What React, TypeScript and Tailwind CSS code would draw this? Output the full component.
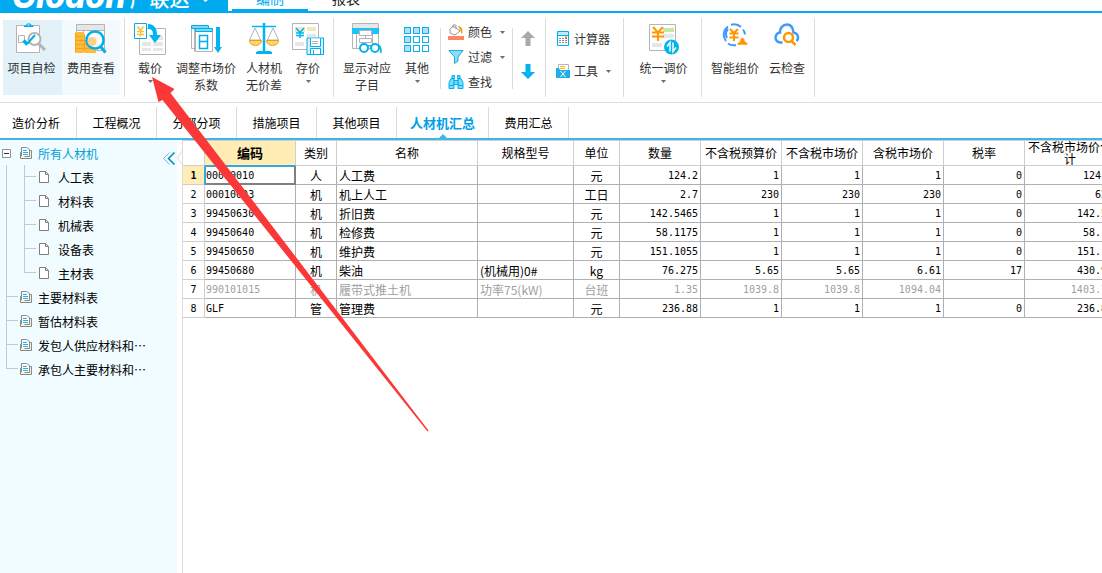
import { useState } from "react";
import type { ReactNode } from "react";

function CheckIcon() {
  return (
    <svg width="32" height="32" viewBox="0 0 32 32" fill="none">
      <path d="M.5 2.500h23v27H.5z" fill="#fff" stroke="#b4b4b4" />
      <path d="M8 4V2.500h2C10.500-.5 15-.5 15.500 2.500h2V4z" fill="#00aeef" />
      <path d="M11.500 2h2" stroke="#fff" />
      <path d="M2.500 12.500h6v7h-6z" fill="#fff" stroke="#b4b4b4" />
      <circle cx="18.500" cy="16" r="6" fill="#fff" stroke="#b4b4b4" strokeWidth="2" />
      <path d="M23 21l6 6" stroke="#b4b4b4" strokeWidth="3" />
      <path d="M7.500 17.500l4 4" stroke="#00aeef" strokeWidth="3.500" />
      <path d="M11 21l8-9" stroke="#00aeef" strokeWidth="2" />
    </svg>
  );
}

function CostIcon() {
  return (
    <svg width="32" height="32" viewBox="0 0 32 32" fill="none">
      <path d="M1.500 1.500h28v26h-28z" fill="#fff" stroke="#b4b4b4" />
      <path d="M2 2h27v5H2z" fill="#e6e6e6" />
      <path d="M2 7.500h27M8.500 8v19M15.500 8v19M22.500 8v19M2 14.500h27M2 21.500h27" stroke="#b4b4b4" />
      <path d="M0 10l1-1h7l1 1v20H1l-1-1zM10 17h11v13H10z" fill="#fdbb3c" />
      <path d="M1 13.500h7M1 17.500h11M1 21.500h11M1 25.500h20M9.500 11v18M.5 10v19" stroke="#f7a01b" />
      <circle cx="20" cy="17" r="8.500" fill="#fff" fillOpacity=".85" stroke="#00aeef" strokeWidth="2.500" />
      <circle cx="17" cy="18.500" r="4.500" fill="#fcd08a" />
      <path d="M25.500 23.500l5 6" stroke="#00aeef" strokeWidth="3" />
    </svg>
  );
}

function LoadPriceIcon() {
  return (
    <svg width="32" height="32" viewBox="0 0 32 32" fill="none">
      <path d="M5.500 5.500h26v26h-26z" fill="#fff" stroke="#b4b4b4" />
      <path d="M8 19h9v4H8zM19 19h10v4H19zM8 25h9v3H8zM19 25h10v3H19zM23 13h6v4h-6z" fill="#e6e6e6" />
      <path d="M.500.500h12v15H.5z" fill="#fff" stroke="#00aeef" />
      <path d="M3.500 3.500l3 4 3-4M3 8.500h7M3 11.500h7M6.500 7.500v6" stroke="#f9c23c" strokeWidth="1.500" />
      <path d="M14 1c6 0 9 4 9 11h4l-6 8-6-8h4c0-4-1-6-5-6z" fill="#00b4f0" />
    </svg>
  );
}

function AdjustIcon() {
  return (
    <svg width="32" height="32" viewBox="0 0 32 32" fill="none">
      <path d="M1.500 3v22.500H5M4.500 6v22.500" stroke="#b4b4b4" />
      <path d="M1.500 2.500h17v3H1.500z" fill="#7fd7f5" stroke="#00aeef" />
      <path d="M5.500 5.500h17v23h-17z" fill="#fff" stroke="#b4b4b4" />
      <path d="M5.500 5.500h17v3h-17z" fill="#7fd7f5" stroke="#00aeef" />
      <path d="M9.500 12.500h8v13h-8zM9.500 18.500h8" stroke="#00aeef" strokeWidth="1.500" />
      <path d="M26 4h4v20h2l-4 6-4-6h2z" fill="#00b4f0" />
    </svg>
  );
}

function ScaleIcon() {
  return (
    <svg width="32" height="32" viewBox="0 0 32 32" fill="none">
      <path d="M7 5L1.500 17h11zM25 5l-5.500 12h11z" stroke="#b4b4b4" />
      <path d="M1.500 17.500h12c0 6.500-12 6.500-12 0zM18.500 17.500h12c0 6.500-12 6.500-12 0z" fill="#fbd96e" stroke="#f39c12" />
      <path d="M4 3.500h24" stroke="#00b4f0" strokeWidth="1.500" />
      <path d="M16 0v28" stroke="#00b4f0" strokeWidth="2.500" />
      <path d="M8 31v-2l2-1h12l2 1v2z" fill="#00b4f0" />
    </svg>
  );
}

function SaveIcon() {
  return (
    <svg width="32" height="32" viewBox="0 0 32 32" fill="none">
      <path d="M.5.500h26v26H.5z" fill="#fff" stroke="#b4b4b4" />
      <path d="M3 4h10v5H3zM15 4h9v4h-9z" fill="#f3e6bd" />
      <path d="M15 11h9v3h-9zM3 19h9v4H3z" fill="#e6e6e6" />
      <path d="M4 5l4 4.500L12 5M4 10h8M4 12.500h8M8 9v6" stroke="#00b4f0" strokeWidth="1.500" />
      <path d="M15 15h16.500v16.500H15z" fill="#d9f3fc" stroke="#00aeef" />
      <path d="M18.500 15.500v8h10v-8M18.500 31v-5.500h10V31M21.500 27v4" fill="#fff" stroke="#00aeef" />
      <path d="M20 18.500h6M20 20.500h6" stroke="#b4b4b4" />
    </svg>
  );
}

function ShowIcon() {
  return (
    <svg width="32" height="32" viewBox="0 0 32 32" fill="none">
      <path d="M1.500.500h26v25h-26zM5.500 1v24M14.500 1v24M21.500 1v24" stroke="#b4b4b4" fill="#fff" />
      <path d="M2 1h25v4H2z" fill="#e6e6e6" />
      <path d="M1 5h27v6H1z" fill="#1cc3f5" />
      <path d="M8.500 7.500h12v5h-12zM8.500 15.500h12v4h-12z" fill="#fff" stroke="#b4b4b4" />
      <circle cx="13" cy="25" r="4" fill="#fff" stroke="#00b4f0" strokeWidth="2" />
      <circle cx="24" cy="25" r="4" fill="#fff" stroke="#00b4f0" strokeWidth="2" />
      <path d="M10 22l3-1.500M16.500 23.500c1-1 3-1 4 0M27 22c3 1 3 4 3 8" stroke="#00b4f0" strokeWidth="1.500" />
    </svg>
  );
}

const dots = [0, 9, 18];

function OtherIcon() {
  return (
    <svg width="32" height="32" viewBox="0 0 32 32" fill="none">
      {dots.map((y) =>
        dots.map((x) => (
          <rect
            key={`${x}-${y}`}
            x={x + 3.5}
            y={y + 4.5}
            width="6"
            height="6"
            fill={y === 0 || x === 0 ? "#b8ddf2" : "#fff"}
            stroke="#00b4f0"
          />
        ))
      )}
    </svg>
  );
}

function UnifyIcon() {
  return (
    <svg width="32" height="32" viewBox="0 0 32 32" fill="none">
      <path d="M1.500 1.500h26v26h-26z" fill="#fff" stroke="#b4b4b4" />
      <path d="M15 5h11v4H15z" fill="#c5e8a5" />
      <path d="M15 11h11v4H15zM4 20h10v4H4z" fill="#e6e6e6" />
      <path d="M5 4l5 5.500L15 4M4 9.500h12M4 13.500h12M10 9v9" stroke="#ff9800" strokeWidth="2" />
      <circle cx="23.500" cy="24" r="7.500" fill="#00b4f0" />
      <path d="M22 28.500v-9l-3 4M25 19.500v9l3-4" stroke="#fff" strokeWidth="1.500" />
    </svg>
  );
}

function SmartIcon() {
  return (
    <svg width="32" height="32" viewBox="0 0 32 32" fill="none">
      <path
        d="M9 3.500A10 10 0 0 0 7 18M12 1.800A10 10 0 0 1 22 4M24 6.500a10 10 0 0 1 2 5M9 20.500a10 10 0 0 0 8 1.500M9 6a8 8 0 0 0-1 9"
        stroke="#3d9bff"
        strokeWidth="2"
      />
      <path d="M11 6l4 4 4-4M10.500 10.500h9M10.500 14.500h9M15 10v8" stroke="#ff9800" strokeWidth="2" />
      <path d="M18 22c0-2.500 2-3 3-3.500 0-5 5-5 5 0 1 .5 3 1 3 3.500z" fill="#ff9800" stroke="#fff" strokeWidth=".5" />
    </svg>
  );
}

function CloudIcon() {
  return (
    <svg width="32" height="32" viewBox="0 0 32 32" fill="none">
      <path
        d="M11.500 19.500H9.500C5.500 19.500 3.500 15.500 5 12.500c1-2 3-3 4-3C8.500 5 12 1.500 16 1.500S22 5 22.500 9.500c3 .5 5 3 4.500 5.500 0 1.500-1 2.500-1.500 3"
        stroke="#3d9bff"
        strokeWidth="2.500"
      />
      <circle cx="17.500" cy="14.500" r="4.500" fill="#fff" stroke="#ff9800" strokeWidth="2.500" />
      <path d="M20.500 18l4 4" stroke="#ff9800" strokeWidth="2.500" />
    </svg>
  );
}

function BucketIcon() {
  return (
    <svg width="16" height="16" viewBox="0 0 16 16" fill="none">
      <path d="M5 2l7 5-5 4-5-2V5zM5 4V1h3v4" fill="#fff" stroke="#999" />
      <path d="M10 2c4 0 5 4 4 8-1 0-1-3-2-4z" fill="#ff9800" />
      <path d="M0 12h16v4H0z" fill="#ff8563" />
    </svg>
  );
}

function FilterIcon() {
  return (
    <svg width="16" height="16" viewBox="0 0 16 16" fill="none">
      <path d="M1 1.500h14L10 8v4l-3.500 2.500V8z" fill="#8fdcf7" stroke="#1fa9df" />
    </svg>
  );
}

function FindIcon() {
  return (
    <svg width="16" height="16" viewBox="0 0 16 16" fill="none">
      <path d="M3 4.500L1 9v5.500h5V5zM13 4.500L15 9v5.500h-5V5z" fill="#7fdaf7" stroke="#00aeef" />
      <path d="M4 1.500h2.500v3H4zM9.500 1.500H12v3H9.500zM6 6.500h4v4H6zM1 11.500h5M10 11.500h5" fill="#7fdaf7" stroke="#00aeef" />
    </svg>
  );
}

function CalcIcon() {
  return (
    <svg width="14" height="16" viewBox="0 0 14 16" fill="none">
      <path d="M1.500.5h11v14h-11z" fill="#fff" stroke="#00aeef" />
      <path d="M2 1h10v3H2z" fill="#bfeafa" />
      <path d="M2 4.500h10" stroke="#00aeef" />
      <path d="M3 7.500h8M3 9.500h8M3 11.500h8" stroke="#888" strokeDasharray="2 1" />
      <path d="M9 5.500h2v2H9z" fill="#f26c4f" />
    </svg>
  );
}

function ToolsIcon() {
  return (
    <svg width="14" height="16" viewBox="0 0 14 16" fill="none">
      <path d="M2.500 1.500h10v6h-10z" fill="#fff" stroke="#b4b4b4" />
      <path d="M4 3.500h5M4 5.500h5" stroke="#f9b700" />
      <path d="M0 5h3l1 2h10v8H0z" fill="#1eaeea" />
      <path d="M4.500 8l5 6M9.500 8l-5 6" stroke="#fff" />
    </svg>
  );
}

function FolderIcon() {
  return (
    <svg width="12" height="13" viewBox="0 0 12 13" fill="none" className="shrink-0">
      <path d="M.5 5.500h11v6H.5z" fill="#fdf0c0" stroke="#808a90" />
      <path d="M1.500.5h5l3 2v7h-8zM9.500 3.500h2v6" fill="#fff" stroke="#808a90" />
      <path d="M3 3.500h4M3 5.500h5M3 7.500h5" stroke="#29abe2" />
      <path d="M1 9h3l1 1h6v1H1z" fill="#fdf0c0" />
    </svg>
  );
}

function FileIcon() {
  return (
    <svg width="10" height="13" viewBox="0 0 10 13" fill="none" className="shrink-0">
      <path d="M.5.500h6l3 3v8h-9zM6.500.500v3h3" fill="#fff" stroke="#808080" />
    </svg>
  );
}

function Caret() {
  return (
    <svg width="5" height="3" viewBox="0 0 5 3" className="shrink-0">
      <path d="M0 0h5L2.500 3z" fill="#6b6b75" />
    </svg>
  );
}

function ToolButton({
  icon,
  lines,
  caret,
  className,
}: {
  icon: ReactNode;
  lines: string[];
  caret?: boolean;
  className: string;
}) {
  return (
    <button
      type="button"
      className={`flex h-[75px] shrink-0 flex-col items-center whitespace-nowrap pt-[3px] leading-[17px] ${className}`}
    >
      {icon}
      <span className="h-1 shrink-0" />
      {lines.map((line) => (
        <span key={line}>{line}</span>
      ))}
      {caret && (
        <span className="pt-1">
          <Caret />
        </span>
      )}
    </button>
  );
}

function SmallButton({ icon, label, caret }: { icon: ReactNode; label: string; caret?: boolean }) {
  return (
    <button type="button" className="flex items-center gap-1 whitespace-nowrap leading-4">
      {icon}
      <span>{label}</span>
      {caret && (
        <span className="pl-1">
          <Caret />
        </span>
      )}
    </button>
  );
}

function Divider({ short }: { short?: boolean }) {
  return <span className={`w-px shrink-0 bg-[#dcdcdc] ${short ? "my-2 h-[61px]" : "-my-0.5 h-[79px]"}`} />;
}

function Branch({ last }: { last?: boolean }) {
  return (
    <span className="flex h-6 w-3 shrink-0 flex-col">
      <span className="h-3 border-b border-l border-[#c4c9cb]" />
      <span className={`h-3 border-[#c4c9cb] ${last ? "" : "border-l"}`} />
    </span>
  );
}

const tabs = ["造价分析", "工程概况", "分部分项", "措施项目", "其他项目", "人材机汇总", "费用汇总"];

const files = ["人工表", "材料表", "机械表", "设备表", "主材表"];

const folders = ["主要材料表", "暂估材料表", "发包人供应材料和…", "承包人主要材料和…"];

const columns = [
  "类别",
  "名称",
  "规格型号",
  "单位",
  "数量",
  "不含税预算价",
  "不含税市场价",
  "含税市场价",
  "税率",
  "不含税市场价合计",
];

const rows = [
  ["00000010", "人", "人工费", "", "元", "124.2", "1", "1", "1", "0", "124.2"],
  ["00010003", "机", "机上人工", "", "工日", "2.7", "230", "230", "230", "0", "621"],
  ["99450630", "机", "折旧费", "", "元", "142.5465", "1", "1", "1", "0", "142.55"],
  ["99450640", "机", "检修费", "", "元", "58.1175", "1", "1", "1", "0", "58.12"],
  ["99450650", "机", "维护费", "", "元", "151.1055", "1", "1", "1", "0", "151.11"],
  ["99450680", "机", "柴油", "(机械用)0#", "kg", "76.275", "5.65", "5.65", "6.61", "17", "430.95"],
  ["990101015", "机", "履带式推土机", "功率75(kW)", "台班", "1.35", "1039.8", "1039.8", "1094.04", "", "1403.73"],
  ["GLF", "管", "管理费", "", "元", "236.88", "1", "1", "1", "0", "236.88"],
];

const mono = "font-['DejaVu_Sans_Mono','Noto_Sans_CJK_SC',monospace] text-[10px]";

function cellClass(col: number) {
  if (col === 0) return `${mono} text-left pl-px`;
  if (col === 1 || col === 4) return "text-center";
  if (col === 2 || col === 3) return "text-left pl-0.5";
  return `${mono} text-right pr-0.5`;
}

function Header() {
  return (
    <header className="flex h-[13px] items-end overflow-hidden border-b-2 border-[#00aaef]">
      <div className="flex h-8 w-[228px] shrink-0 items-end gap-1 bg-[#00aaef] pl-3 text-white">
        <span className="font-['Inter',sans-serif] text-[32px] font-extrabold italic leading-7">Glodon</span>
        <span className="text-xl font-medium leading-6">广联达</span>
        <svg width="7" height="12" viewBox="0 0 7 12" className="ml-2">
          <path d="M0 0h7L3.500 3z" fill="#fff" />
        </svg>
      </div>
      <nav className="flex items-end pl-1 text-sm leading-5">
        <a href="#edit" className="w-[76px] border-b-2 border-[#00aaef] pb-px text-center text-[#00aaef]">
          编制
        </a>
        <a href="#report" className="w-[76px] pb-[3px] text-center text-[#222]">
          报表
        </a>
      </nav>
    </header>
  );
}

function Toolbar() {
  return (
    <div className="flex h-[90px] items-start overflow-hidden border-b border-[#dcdcdc] pl-[3px] pt-[7px] text-[#333]">
      <ToolButton icon={<CheckIcon />} lines={["项目自检"]} className="w-[59px] bg-[#e2f2f8] pr-0.5" />
      <ToolButton icon={<CostIcon />} lines={["费用查看"]} className="mr-1 w-[58px] bg-[#f3fafd]" />
      <Divider />
      <ToolButton icon={<LoadPriceIcon />} lines={["载价"]} caret className="w-[50px]" />
      <ToolButton icon={<AdjustIcon />} lines={["调整市场价", "系数"]} className="w-[62px]" />
      <ToolButton icon={<ScaleIcon />} lines={["人材机", "无价差"]} className="w-[54px]" />
      <ToolButton icon={<SaveIcon />} lines={["存价"]} caret className="mr-2 w-[34px]" />
      <Divider />
      <ToolButton icon={<ShowIcon />} lines={["显示对应", "子目"]} className="w-[66px]" />
      <ToolButton icon={<OtherIcon />} lines={["其他"]} caret className="mr-1.5 w-[34px]" />
      <Divider short />
      <div className="flex w-[71px] shrink-0 flex-col gap-[9px] pl-[7px] pt-1">
        <SmallButton icon={<BucketIcon />} label="颜色" caret />
        <SmallButton icon={<FilterIcon />} label="过滤" caret />
        <SmallButton icon={<FindIcon />} label="查找" />
      </div>
      <Divider short />
      <div className="flex w-8 shrink-0 flex-col items-center gap-4 pr-0.5 pt-[11px]">
        <button type="button" aria-label="上移">
          <svg width="14" height="16" viewBox="0 0 14 16" className="block">
            <path d="M7 0l7 7H9.500v8h-5V7H0z" fill="#a9a9a9" />
          </svg>
        </button>
        <button type="button" aria-label="下移">
          <svg width="14" height="16" viewBox="0 0 14 16" className="block">
            <path d="M7 16l7-7H9.500V1h-5v8H0z" fill="#00b4f0" />
          </svg>
        </button>
      </div>
      <Divider />
      <div className="flex w-[77px] shrink-0 flex-col gap-4 pl-[10px] pt-[11px]">
        <SmallButton icon={<CalcIcon />} label="计算器" />
        <SmallButton icon={<ToolsIcon />} label="工具" caret />
      </div>
      <Divider />
      <ToolButton icon={<UnifyIcon />} lines={["统一调价"]} caret className="w-[77px] pl-0.5" />
      <Divider />
      <ToolButton icon={<SmartIcon />} lines={["智能组价"]} className="w-[66px]" />
      <ToolButton icon={<CloudIcon />} lines={["云检查"]} className="mr-2 w-[38px]" />
      <Divider />
    </div>
  );
}

function Sidebar() {
  return (
    <aside className="relative w-[177px] shrink-0 bg-[#f0fcff] pt-px">
      <ul>
        <li className="flex h-6 items-center">
          <button type="button" aria-label="折叠" className="ml-0.5 mr-[9px]">
            <svg width="9" height="9" viewBox="0 0 9 9" fill="none" className="block">
              <path d="M.5.500h8v8h-8z" fill="#fff" stroke="#8d9295" />
              <path d="M2 4.500h5" stroke="#333" />
            </svg>
          </button>
          <FolderIcon />
          <a href="#all" className="pl-1.5 pt-0.5 text-[#00a0d8]">
            所有人材机
          </a>
        </li>
        {files.map((name, i) => (
          <li key={name} className="flex h-6 items-center pl-1.5">
            <span className="h-6 w-[18px] shrink-0 border-l border-[#c4c9cb]" />
            <Branch last={i === files.length - 1} />
            <a href="#file" className="flex items-center gap-[9px] pl-[3px]">
              <FileIcon />
              <span className="pt-0.5">{name}</span>
            </a>
          </li>
        ))}
        {folders.map((name, i) => (
          <li key={name} className="flex h-6 items-center pl-1.5">
            <Branch last={i === folders.length - 1} />
            <a href="#folder" className="flex items-center gap-1.5 whitespace-nowrap pl-0.5">
              <FolderIcon />
              <span className="pt-0.5">{name}</span>
            </a>
          </li>
        ))}
      </ul>
      <button type="button" aria-label="收起" className="absolute right-0.5 top-3">
        <svg width="12" height="13" viewBox="0 0 12 13" fill="none" className="block">
          <path d="M6.500.500l-6 6 6 6" stroke="#6cc5dd" />
          <path d="M11.500.500l-6 6 6 6" stroke="#0089b8" strokeWidth="1.500" />
        </svg>
      </button>
    </aside>
  );
}

function Grid() {
  const [selected, setSelected] = useState(0);

  return (
    <main className="min-w-0 flex-1 overflow-hidden border-l border-[#dcdcdc]">
      <table className="w-[933px] table-fixed border-separate border-spacing-0 border-t border-[#cfcfcf]">
        <colgroup>
          <col className="w-[22px]" />
          <col className="w-[91px]" />
          <col className="w-[41px]" />
          <col className="w-[141px]" />
          <col className="w-[96px]" />
          <col className="w-[46px]" />
          <col className="w-[81px]" />
          <col className="w-[81px]" />
          <col className="w-[81px]" />
          <col className="w-[81px]" />
          <col className="w-[81px]" />
          <col className="w-[91px]" />
        </colgroup>
        <thead>
          <tr className="h-[25px] leading-3">
            <th className="border-b border-r border-[#cfcfcf] p-0" />
            <th
              className={`border-b border-r border-[#cfcfcf] bg-[#ffedb5] p-0 text-[13px] font-bold ${
                selected === 0 ? "border-b-[#35a8d8]" : ""
              }`}
            >
              编码
            </th>
            {columns.map((label) => (
              <th key={label} className="h-[25px] border-b border-r border-[#cfcfcf] p-0 font-normal">
                {label}
              </th>
            ))}
          </tr>
        </thead>
        <tbody>
          {rows.map((row, r) => (
            <tr key={row[0]} className="h-[19px] leading-4" onClick={() => setSelected(r)}>
              <th
                className={`border-b border-r border-[#cfcfcf] p-0 pt-px ${mono} ${
                  r === selected ? "border-r-[#35a8d8] bg-[#ffedb5] font-bold" : "font-normal"
                }`}
              >
                {r + 1}
              </th>
              {row.map((value, c) => (
                <td
                  key={c}
                  className={`overflow-hidden whitespace-nowrap border-b border-r border-[#b0b0b0] pb-0 pt-px ${cellClass(c)} ${
                    r === 6 ? "text-[#a0a0a0]" : ""
                  } ${
                    r === selected && c === 0
                      ? "border-b-[#808080] border-r-[#808080] shadow-[inset_1px_1px_0_#35a8d8,inset_-1px_-1px_0_#808080]"
                      : ""
                  }`}
                >
                  {value}
                </td>
              ))}
            </tr>
          ))}
        </tbody>
      </table>
    </main>
  );
}

export default function App() {
  const [tab, setTab] = useState("人材机汇总");

  return (
    <div className="relative flex min-h-screen flex-col overflow-hidden bg-white font-['Noto_Sans_CJK_SC',sans-serif] text-xs text-black">
      <Header />
      <Toolbar />
      <nav className="flex h-[37px] items-end overflow-hidden border-b-2 border-[#40b6e4]">
        {tabs.map((label, i) => (
          <button
            key={label}
            type="button"
            onClick={() => setTab(label)}
            className={`relative h-[31px] shrink-0 border-r border-[#dcdcdc] ${
              label === tab ? "w-[92px] text-[13px] font-bold text-[#00a0e9]" : i === 0 ? "w-[77px] pr-1" : "w-20"
            }`}
          >
            {label}
            {label === tab && (
              <svg width="8" height="4" viewBox="0 0 8 4" className="absolute bottom-0 left-1/2 -translate-x-1/2">
                <path d="M4 0l4 4H0z" fill="#40b6e4" />
              </svg>
            )}
          </button>
        ))}
      </nav>
      <div className="flex flex-1">
        <Sidebar />
        <div className="w-[5px] shrink-0 pt-2.5">
          <svg width="5" height="16" viewBox="0 0 5 16" fill="none">
            <path d="M5 1L.5 8 5 15" stroke="#dcdcdc" />
          </svg>
        </div>
        <Grid />
      </div>
      <svg
        width="280"
        height="356"
        viewBox="0 0 280 356"
        className="pointer-events-none absolute left-[150px] top-[76px]"
      >
        <path d="M2 1L24.500 13 20.500 17 278.500 354.500 277.500 355.500 12.500 24 8.500 26z" fill="#fb3838" />
      </svg>
    </div>
  );
}
